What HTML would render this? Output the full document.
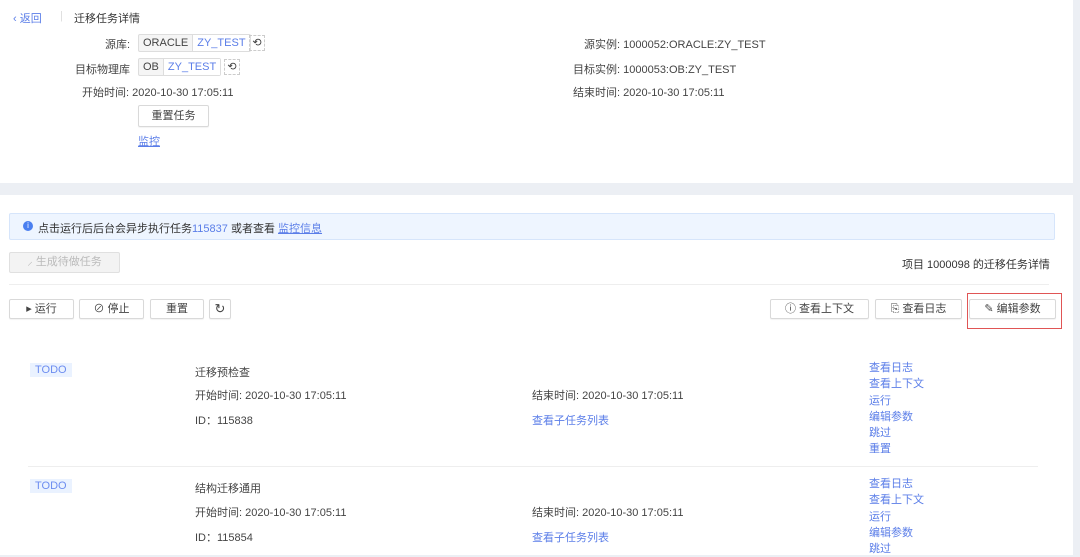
<!DOCTYPE html><html><head><meta charset="utf-8"><style>
body{margin:0;width:1080px;height:555px;background:#eceff4;font-family:"Liberation Sans","Noto Sans CJK SC",sans-serif;font-size:11px;color:#444;position:relative;overflow:hidden}
.a{position:absolute;white-space:nowrap}
.p{position:absolute;background:#fff}
.l{color:#5b7ee8}
.tag{position:absolute;border:1px solid #ddd;border-radius:2px;height:16px;line-height:16px;display:flex}
.tag span{padding:0 4px}
.btn{position:absolute;border:1px solid #d9d9d9;border-radius:2px;background:#fff;height:18px;line-height:18px;text-align:center;box-shadow:0 1px 1px rgba(0,0,0,.05)}
.todo{position:absolute;background:#eaf2ff;color:#6d8df0;padding:0 5px;height:14px;line-height:14px}
.ic{position:absolute;width:14px;height:14px;border:1px dashed #ccc;font-size:11px;line-height:14px;text-align:center}
</style></head><body>
<div class="p" style="left:0;top:0;width:1073px;height:183px"></div>
<div class="p" style="left:0;top:195px;width:1073px;height:360px"></div>
<div class="a l" style="left:13px;top:10px">‹ 返回</div>
<div class="a" style="left:60px;top:10px;color:#ddd">|</div>
<div class="a" style="left:74px;top:10px;color:#333">迁移任务详情</div>
<div class="a" style="left:105px;top:36px">源库:</div>
<div class="tag" style="left:138px;top:34px;background:#f5f5f5"><span style="border-right:1px solid #ddd">ORACLE</span><span class="l" style="background:#fff">ZY_TEST</span></div>
<div class="ic" style="left:249px;top:35px">⟲</div>
<div class="a" style="left:75px;top:61px">目标物理库</div>
<div class="tag" style="left:138px;top:58px;background:#f5f5f5"><span style="border-right:1px solid #ddd">OB</span><span class="l" style="background:#fff">ZY_TEST</span></div>
<div class="ic" style="left:224px;top:59px">⟲</div>
<div class="a" style="left:82px;top:84px">开始时间: 2020-10-30 17:05:11</div>
<div class="btn" style="left:138px;top:105px;width:69px;height:20px;line-height:20px">重置任务</div>
<div class="a l" style="left:138px;top:133px;text-decoration:underline">监控</div>
<div class="a" style="left:584px;top:36px">源实例: 1000052:ORACLE:ZY_TEST</div>
<div class="a" style="left:573px;top:61px">目标实例: 1000053:OB:ZY_TEST</div>
<div class="a" style="left:573px;top:84px">结束时间: 2020-10-30 17:05:11</div>
<div class="a" style="left:9px;top:213px;width:1044px;height:25px;background:#eef5ff;border:1px solid #d6e5fb;border-radius:2px"></div>
<div class="a" style="left:23px;top:221px;width:10px;height:10px;border-radius:50%;background:#4a7ff0;color:#fff;font-size:8px;line-height:10px;text-align:center">i</div>
<div class="a" style="left:38px;top:220px;color:#333">点击运行后后台会异步执行任务<span class="l">115837</span> 或者查看 <span class="l" style="text-decoration:underline">监控信息</span></div>
<div class="a" style="left:9px;top:252px;width:109px;height:19px;background:#f3f3f3;border:1px solid #e0e0e0;border-radius:2px;color:#bbb;line-height:19px;text-align:center">⸝ 生成待做任务</div>
<div class="a" style="left:902px;top:256px;color:#333">项目 1000098 的迁移任务详情</div>
<div class="a" style="left:9px;top:284px;width:1040px;height:1px;background:#eee"></div>
<div class="btn" style="left:9px;top:299px;width:63px">▸ 运行</div>
<div class="btn" style="left:79px;top:299px;width:63px">⊘ 停止</div>
<div class="btn" style="left:150px;top:299px;width:52px">重置</div>
<div class="btn" style="left:209px;top:299px;width:20px;font-size:13px">↻</div>
<div class="btn" style="left:770px;top:299px;width:97px">ⓘ 查看上下文</div>
<div class="btn" style="left:875px;top:299px;width:85px">⎘ 查看日志</div>
<div class="btn" style="left:969px;top:299px;width:85px">✎ 编辑参数</div>
<div class="a" style="left:967px;top:293px;width:93px;height:34px;border:1px solid #e05555"></div>
<div class="todo" style="left:30px;top:363px">TODO</div>
<div class="a" style="left:195px;top:364px">迁移预检查</div>
<div class="a" style="left:195px;top:387px">开始时间: 2020-10-30 17:05:11</div>
<div class="a" style="left:195px;top:412px">ID：115838</div>
<div class="a" style="left:532px;top:387px">结束时间: 2020-10-30 17:05:11</div>
<div class="a l" style="left:532px;top:412px">查看子任务列表</div>
<div class="a l" style="left:869px;top:360px;line-height:16.3px">查看日志<br>查看上下文<br>运行<br>编辑参数<br>跳过<br>重置</div>
<div class="a" style="left:28px;top:466px;width:1010px;height:1px;background:#eee"></div>
<div class="todo" style="left:30px;top:479px">TODO</div>
<div class="a" style="left:195px;top:480px">结构迁移通用</div>
<div class="a" style="left:195px;top:504px">开始时间: 2020-10-30 17:05:11</div>
<div class="a" style="left:195px;top:529px">ID：115854</div>
<div class="a" style="left:532px;top:504px">结束时间: 2020-10-30 17:05:11</div>
<div class="a l" style="left:532px;top:529px">查看子任务列表</div>
<div class="a l" style="left:869px;top:476px;line-height:16.3px">查看日志<br>查看上下文<br>运行<br>编辑参数<br>跳过</div>
</body></html>
